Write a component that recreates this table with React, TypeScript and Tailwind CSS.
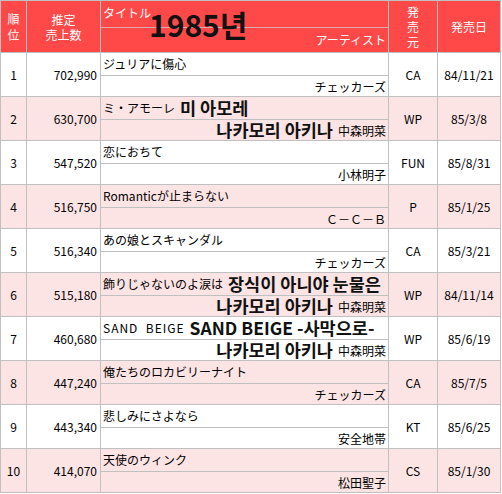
import React from 'react';

type Row = {
  rank: number;
  sales: string;
  title: string;
  titleKo?: string;
  artist: string;
  artistKo?: string;
  label: string;
  date: string;
};

const rows: Row[] = [
  { rank: 1, sales: '702,990', title: 'ジュリアに傷心', artist: 'チェッカーズ', label: 'CA', date: '84/11/21' },
  { rank: 2, sales: '630,700', title: 'ミ・アモーレ', titleKo: '미 아모레', artist: '中森明菜', artistKo: '나카모리 아키나', label: 'WP', date: '85/3/8' },
  { rank: 3, sales: '547,520', title: '恋におちて', artist: '小林明子', label: 'FUN', date: '85/8/31' },
  { rank: 4, sales: '516,750', title: 'Romanticが止まらない', artist: 'Ｃ－Ｃ－Ｂ', label: 'P', date: '85/1/25' },
  { rank: 5, sales: '516,340', title: 'あの娘とスキャンダル', artist: 'チェッカーズ', label: 'CA', date: '85/3/21' },
  { rank: 6, sales: '515,180', title: '飾りじゃないのよ涙は', titleKo: '장식이 아니야 눈물은', artist: '中森明菜', artistKo: '나카모리 아키나', label: 'WP', date: '84/11/14' },
  { rank: 7, sales: '460,680', title: 'SAND  BEIGE', titleKo: 'SAND BEIGE -사막으로-', artist: '中森明菜', artistKo: '나카모리 아키나', label: 'WP', date: '85/6/19' },
  { rank: 8, sales: '447,240', title: '俺たちのロカビリーナイト', artist: 'チェッカーズ', label: 'CA', date: '85/7/5' },
  { rank: 9, sales: '443,340', title: '悲しみにさよなら', artist: '安全地帯', label: 'KT', date: '85/6/25' },
  { rank: 10, sales: '414,070', title: '天使のウィンク', artist: '松田聖子', label: 'CS', date: '85/1/30' },
];

const jp = "font-['Noto_Sans_CJK_JP',sans-serif]";
const ko = "font-['Noto_Sans_CJK_KR',sans-serif] font-bold text-[17.5px] leading-none text-[#111]";

export default function App() {
  return (
    <div className={`w-[502px] h-[494px] bg-white text-[12px] leading-[14px] text-black ${jp}`}>
      <div className="grid w-[501px] grid-cols-[25px_73px_287px_48px_62px] gap-px bg-[#c0c0c0] p-px">
        {/* header */}
        <div className="h-[51px] bg-[#ff4848] text-white flex flex-col items-center justify-center leading-[16px]">
          <span>順</span>
          <span>位</span>
        </div>
        <div className="bg-[#ff4848] text-white flex flex-col items-center justify-center leading-[15px]">
          <span>推定</span>
          <span>売上数</span>
        </div>
        <div className="relative bg-[#ff4848] text-white flex flex-col">
          <div className="h-[26px] flex items-start pt-[5px] pl-[2px]">タイトル</div>
          <div className="h-px bg-[#e0a8a8]" />
          <div className="flex-1 flex items-center justify-end pr-[2px]">アーティスト</div>
          <span className="absolute left-[48px] top-[8px] font-['Noto_Sans_CJK_KR',sans-serif] font-bold text-[30px] leading-none text-[#111]">
            1985년
          </span>
        </div>
        <div className="bg-[#ff4848] text-white flex flex-col items-center justify-center leading-[15px]">
          <span>発</span>
          <span>売</span>
          <span>元</span>
        </div>
        <div className="bg-[#ff4848] text-white flex items-center justify-center">発売日</div>

        {rows.map((r) => {
          const bg = r.rank % 2 === 0 ? 'bg-[#fde4e4]' : 'bg-white';
          return (
            <React.Fragment key={r.rank}>
              <div className={`${bg} h-[43px] flex items-center justify-center`}>{r.rank}</div>
              <div className={`${bg} flex items-center justify-end pr-[3px]`}>{r.sales}</div>
              <div className="flex flex-col gap-px">
                <div className={`${bg} h-[22px] flex items-center gap-[5px] pl-[2px] whitespace-pre`}>
                  <span className={r.rank === 7 ? 'tracking-[1px]' : ''}>{r.title}</span>
                  {r.titleKo && <span className={ko}>{r.titleKo}</span>}
                </div>
                <div className={`${bg} flex-1 flex items-end justify-end gap-[5px] pr-[2px] pb-[2px] whitespace-nowrap`}>
                  {r.artistKo && <span className={ko}>{r.artistKo}</span>}
                  <span>{r.artist}</span>
                </div>
              </div>
              <div className={`${bg} flex items-center justify-center`}>{r.label}</div>
              <div className={`${bg} flex items-center justify-center`}>{r.date}</div>
            </React.Fragment>
          );
        })}
      </div>
    </div>
  );
}
